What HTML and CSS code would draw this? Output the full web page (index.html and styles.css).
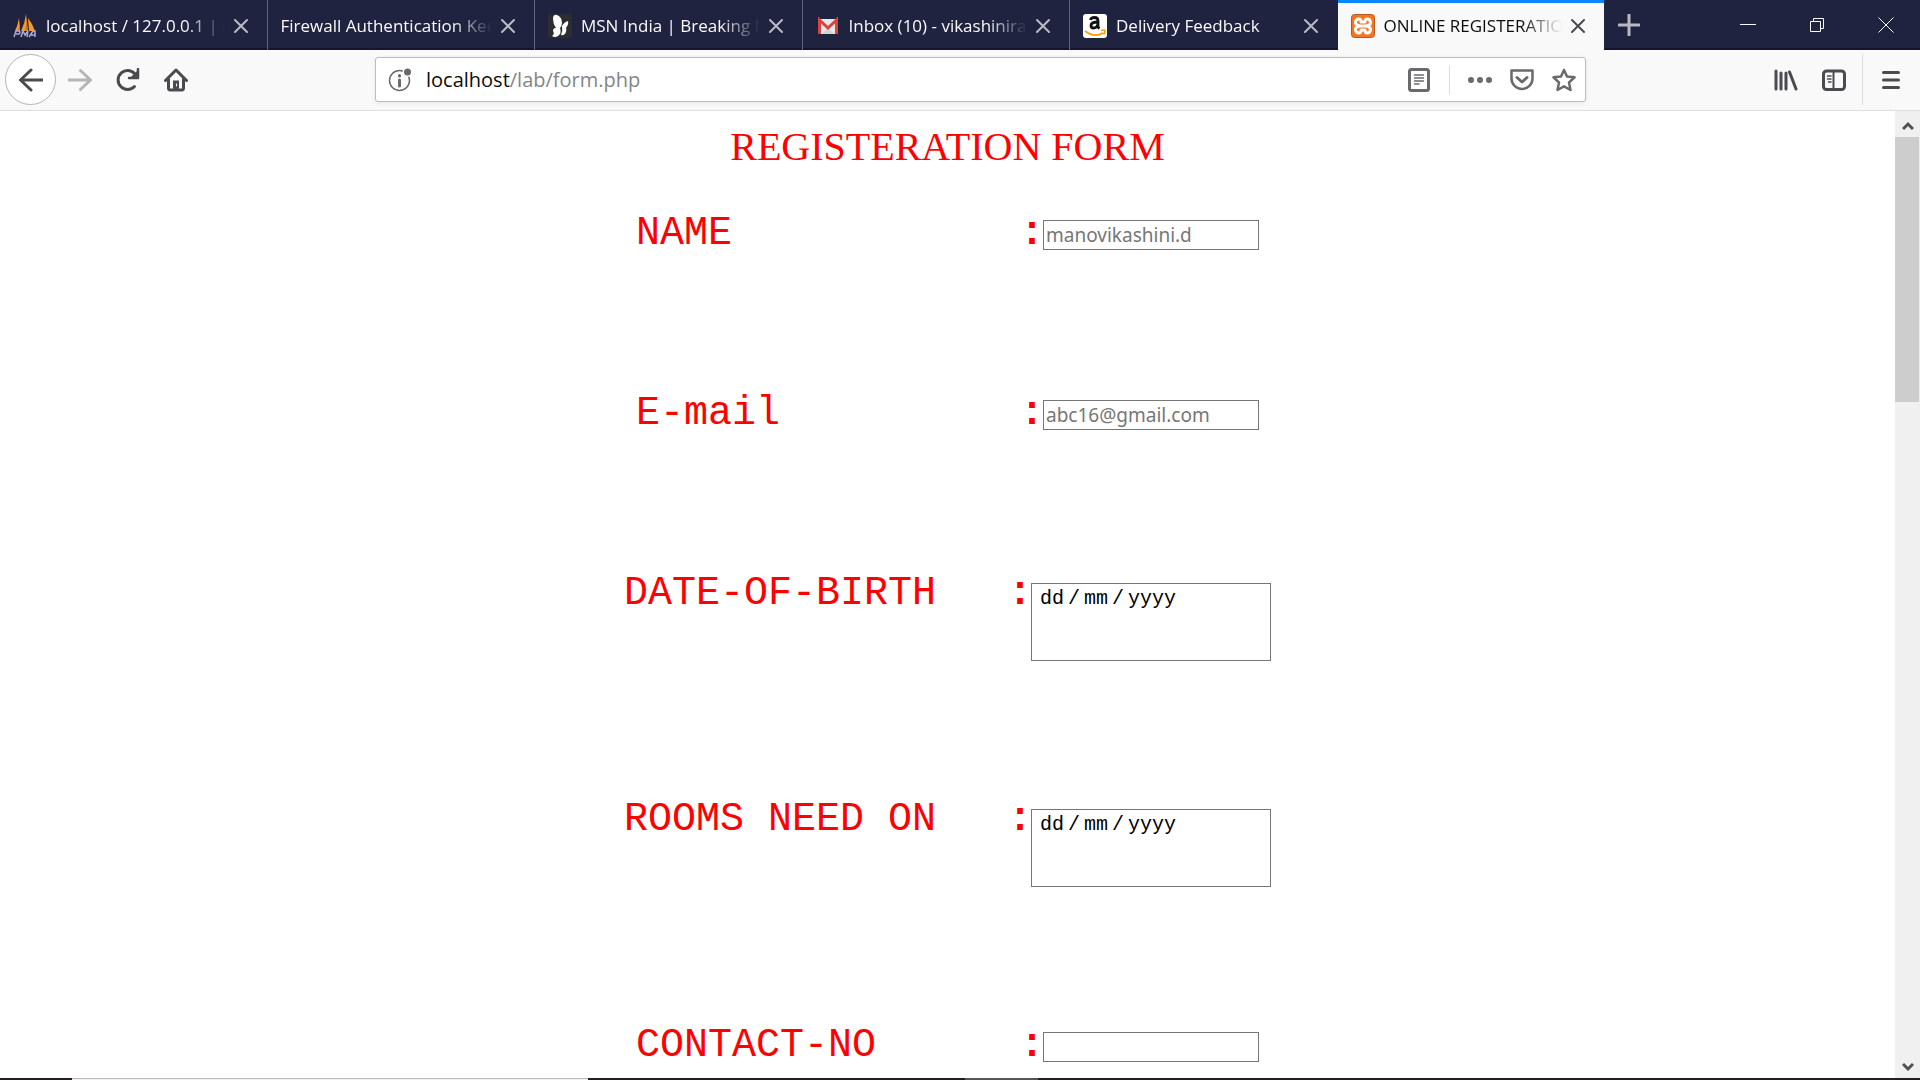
FILE: index.html
```html
<!DOCTYPE html>
<html lang="en">
<head>
<meta charset="utf-8">
<title>ONLINE REGISTERATION</title>
<link rel="stylesheet" href="styles.css">
</head>
<body>
<header class="tabbar">
  <nav class="tabs" aria-label="Tabs">
    <div class="tab">
      <svg class="favicon" viewBox="0 0 24 24"><path d="M2 17Q5 11 6 4L7 17ZM8 17Q12 9 13 0L15 17ZM15 4Q19 9 22 17H16Z" fill="#f79a28"/><path d="M5 17L7 7V17ZM12 17L14 5V17Z" fill="#c9782a"/><path d="M1 23L3 17H6Q8 18 6 20H3M8 23L10 17L12 21L15 17L14 23M16 23L20 17H22V23M18 21H22" fill="none" stroke="#a9abd6" stroke-width="1.5"/></svg>
      <a class="tab-title" href="#">localhost / 127.0.0.1 | p</a>
      <button class="tab-close" aria-label="Close tab"><svg viewBox="0 0 16 16"><path d="M2 2L14 14M14 2L2 14"/></svg></button>
    </div>
    <div class="tab">
      <a class="tab-title" href="#">Firewall Authentication Kee</a>
      <button class="tab-close" aria-label="Close tab"><svg viewBox="0 0 16 16"><path d="M2 2L14 14M14 2L2 14"/></svg></button>
    </div>
    <div class="tab">
      <svg class="favicon" viewBox="0 0 24 24"><path d="M0 0H24V24H0Z" fill="#2b2d30"/><path d="M5 5Q5 0 9 1Q14 3 14 9Q14 12 12 14Q14 19 10 22Q7 24 4 22Q7 20 5 17Q5 14 8 14Q5 10 5 5ZM14 12Q16 8 20 7Q21 10 18 14Q19 16 17 20Q14 22 13 21Q15 17 14 12Z" fill="#fff"/></svg>
      <a class="tab-title" href="#">MSN India | Breaking N</a>
      <button class="tab-close" aria-label="Close tab"><svg viewBox="0 0 16 16"><path d="M2 2L14 14M14 2L2 14"/></svg></button>
    </div>
    <div class="tab">
      <svg class="favicon" viewBox="0 0 24 24"><path d="M3 5H21V20H3Z" fill="#e9e9e9"/><path d="M6 20L12 13L18 20Z" fill="#d5d5d5"/><path d="M3.500 20V6L12 14L20.500 6V20" fill="none" stroke="#d9453a" stroke-width="3"/></svg>
      <a class="tab-title" href="#">Inbox (10) - vikashinira</a>
      <button class="tab-close" aria-label="Close tab"><svg viewBox="0 0 16 16"><path d="M2 2L14 14M14 2L2 14"/></svg></button>
    </div>
    <div class="tab">
      <svg class="favicon" viewBox="0 0 24 24"><rect width="24" height="24" rx="3" fill="#fff"/><path d="M7.500 6Q8 3.500 11.500 3.500Q15 3.500 15 7V12Q15 13.500 16.500 14.500M15 8Q8 8 8 11.500Q8 14 10.500 14Q14 14 15 10" fill="none" stroke="#111" stroke-width="2.800"/><path d="M2 17Q11 24 20 19M18 16.500Q22 15.500 22 16.500Q22 19 20.500 20.500" fill="none" stroke="#f90" stroke-width="1.700"/></svg>
      <a class="tab-title" href="#">Delivery Feedback</a>
      <button class="tab-close" aria-label="Close tab"><svg viewBox="0 0 16 16"><path d="M2 2L14 14M14 2L2 14"/></svg></button>
    </div>
    <div class="tab tab-active">
      <svg class="favicon" viewBox="0 0 24 24"><rect x=".5" y=".5" width="23" height="23" rx="3" fill="#f37623" stroke="#b9581c"/><path d="M9 12H15M9 12Q4 11 4.500 8Q5 5 8 5Q10 5 10 8H14Q14 5 16 5Q19 5 19.500 8Q20 11 15 12Q20 13 19.500 16Q19 19 16 19Q14 19 14 16H10Q10 19 8 19Q5 19 4.500 16Q4 13 9 12Z" fill="none" stroke="#fff" stroke-width="3" stroke-linejoin="round"/></svg>
      <a class="tab-title" href="#" aria-current="page">ONLINE REGISTERATIO</a>
      <button class="tab-close" aria-label="Close tab"><svg viewBox="0 0 16 16"><path d="M2 2L14 14M14 2L2 14"/></svg></button>
    </div>
  </nav>
  <button class="new-tab" aria-label="New tab"><svg viewBox="0 0 22 22"><path d="M11 1V21M1 11H21"/></svg></button>
  <div class="window-controls">
    <button aria-label="Minimize"><svg viewBox="0 0 16 16"><path d="M0 7.500H16"/></svg></button>
    <button aria-label="Restore"><svg viewBox="0 0 16 16"><path d="M1.500 4.500H11.500V14.500H1.500ZM4.500 4V1.500H14.500V11.500H12"/></svg></button>
    <button aria-label="Close window"><svg viewBox="0 0 16 16"><path d="M.5 .5L15.500 15.500M15.500 .5L.5 15.500"/></svg></button>
  </div>
</header>

<div class="toolbar">
  <div class="nav-buttons">
    <button class="back" aria-label="Back"><svg class="icon" viewBox="0 0 24 24"><path d="M24 12H1.500M12 2L1.500 12L12 22" stroke-width="3"/></svg></button>
    <button class="forward" aria-label="Forward"><svg class="icon" viewBox="0 0 24 24"><path d="M0 12H22.500M12.500 2.500L22.500 12L12.500 21.500" stroke-width="3"/></svg></button>
    <button aria-label="Reload"><svg class="icon" viewBox="0 0 24 24"><path d="M18.500 18.500A9.500 9.500 0 1 1 19 6" stroke-width="3"/><path d="M22 1V10H13" stroke-width="2.500"/><path d="M22 2V10H14Z" fill="currentColor" stroke="none"/></svg></button>
    <button aria-label="Home"><svg class="icon" viewBox="0 0 24 24"><path d="M1.500 12.500L12 2L22.500 12.500M4.500 11V20Q4.500 22 6.500 22H17.500Q19.500 22 19.500 20V11" stroke-width="3"/><path d="M9 22V12.500H15V22Z" fill="currentColor" stroke="none"/><path d="M12.500 16V18" stroke="#f9f9fa" stroke-width="1"/></svg></button>
  </div>
  <div class="urlbar">
    <button aria-label="Site information"><svg class="icon" viewBox="0 0 24 24"><circle cx="11.500" cy="12.500" r="10" stroke-width="1.500"/><circle cx="19.500" cy="4" r="5" fill="#fff" stroke="none"/><circle cx="19.500" cy="4" r="3.500" fill="currentColor" stroke="none"/><path d="M11.500 12V18M11.500 7.500V8" stroke-width="3"/></svg></button>
    <a class="url" href="#">localhost<span class="url-path">/lab/form.php</span></a>
    <button aria-label="Reader view"><svg class="icon" viewBox="0 0 24 24"><rect x="2.500" y="1.500" width="19" height="21" rx="2" stroke-width="3"/><path d="M7.500 7H16.500M7.500 10H16.500M7.500 13H16.500M7.500 16H12" stroke-width="1.500"/></svg></button>
    <div class="page-actions">
      <button aria-label="Page actions"><svg class="icon" viewBox="0 0 24 24"><path d="M3 12H3.010M12 12H12.010M21 12H21.010" stroke-width="6"/></svg></button>
      <button aria-label="Save to Pocket"><svg class="icon" viewBox="0 0 24 24"><path d="M1.500 2.500H22.500V10.500A10.500 10.500 0 0 1 1.500 10.500Z" stroke-width="2.500"/><path d="M7 9.500L12 14L17 9.500" stroke-width="3"/></svg></button>
      <button aria-label="Bookmark"><svg class="icon" viewBox="0 0 24 24"><path d="M12 2L15 8.500L22.500 9.300L17 14.500L18.500 22L12 18.300L5.500 22L7 14.500L1.500 9.300L9 8.500Z" stroke-width="2.500"/></svg></button>
    </div>
  </div>
  <div class="tools">
    <button aria-label="Library"><svg class="icon" viewBox="0 0 24 24"><path d="M2 3V21M7 5V21M12 5V21M15.500 4L22 21" stroke-width="3"/></svg></button>
    <button aria-label="Sidebars"><svg class="icon" viewBox="0 0 24 24"><rect x="1.500" y="3" width="21" height="18.500" rx="3" stroke-width="3"/><path d="M11.500 3V21" stroke-width="2"/><path d="M5.500 8H9M5.500 11H9M6.500 14H9" stroke-width="1.500"/></svg></button>
    <button class="menu" aria-label="Menu"><svg class="icon" viewBox="0 0 24 24"><path d="M4.500 4.500H19.500M4.500 12H19.500M4.500 19.500H19.500" stroke-width="3"/></svg></button>
  </div>
</div>

<div class="viewport">
  <main class="page">
    <h1>REGISTERATION FORM</h1>
    <form class="form">
      <div class="row"><label for="name">NAME</label><b>:</b><input class="text" id="name" type="text" placeholder="manovikashini.d"></div>
      <div class="row"><label for="email">E-mail</label><b>:</b><input class="text" id="email" type="email" placeholder="abc16@gmail.com"></div>
      <div class="row"><label for="birth">DATE-OF-BIRTH</label><b>:</b>
        <div class="date" role="group" aria-label="Date of birth"><input id="birth" placeholder="dd" aria-label="Day"><span>/</span><input placeholder="mm" aria-label="Month"><span>/</span><input class="year" placeholder="yyyy" aria-label="Year"></div></div>
      <div class="row"><label for="rooms">ROOMS NEED ON</label><b>:</b>
        <div class="date" role="group" aria-label="Rooms need on"><input id="rooms" placeholder="dd" aria-label="Day"><span>/</span><input placeholder="mm" aria-label="Month"><span>/</span><input class="year" placeholder="yyyy" aria-label="Year"></div></div>
      <div class="row"><label for="contact">CONTACT-NO</label><b>:</b><input class="text" id="contact" type="tel"></div>
    </form>
  </main>
  <div class="scrollbar">
    <button aria-label="Scroll up"><svg viewBox="0 0 12 10"><path d="M1 8L6 3L11 8"/></svg></button>
    <div class="track"><div class="thumb"></div></div>
    <button aria-label="Scroll down"><svg viewBox="0 0 12 10"><path d="M1 2L6 7L11 2"/></svg></button>
  </div>
</div>

<footer class="taskbar"><div class="start"></div><div class="search"></div><div class="apps"></div><div class="running"></div></footer>
</body>
</html>
```
FILE: styles.css
```css
* { box-sizing: border-box; }

body {
  margin: 0;
  height: 100vh;
  display: flex;
  flex-direction: column;
  overflow: hidden;
  background: #fff;
  font-family: "Open Sans", "Noto Sans", sans-serif;
}

button {
  display: flex;
  align-items: center;
  justify-content: center;
  padding: 0;
  border: 0;
  background: none;
  color: inherit;
}

a { color: inherit; text-decoration: none; }

svg { fill: none; stroke: currentColor; flex: none; }

/* Tab strip */
.tabbar {
  display: flex;
  flex: none;
  height: 50px;
  background: #202340;
  box-shadow: inset 0 -2px #15162c;
  color: #f9f9fa;
}

.tabs { display: flex; flex: 1; min-width: 0; }

.tab {
  display: flex;
  flex: 1 1 0;
  align-items: center;
  min-width: 0;
  padding: 2px 18px 0 13px;
  border-right: 1px solid #63657a;
}

.tab:nth-last-child(2) { border-right-color: transparent; }

.tab-active {
  padding-top: 0;
  padding-bottom: 1px;
  border-top: 3px solid #0a84ff;
  border-right: 0;
  background: #f9f9fa;
  color: #0c0c0d;
}

.favicon { width: 24px; height: 24px; margin-right: 9px; stroke: none; }

.tab-title {
  flex: 1;
  overflow: hidden;
  white-space: nowrap;
  font-size: 17px;
  line-height: 24px;
  mask-image: linear-gradient(to left, transparent, #000 40px);
}

.tab-close { margin-left: 8px; color: #b9bac6; }
.tab-active .tab-close { color: #4a4a4f; }
.tab-close svg { width: 16px; height: 16px; stroke-width: 2; stroke-linecap: round; }

.new-tab { width: 50px; color: #b9bac6; }
.new-tab svg { width: 22px; height: 22px; stroke-width: 3; stroke-linecap: round; }

.window-controls { display: flex; margin-left: 59px; }
.window-controls button { width: 69px; }
.window-controls svg { width: 16px; height: 16px; }

/* Navigation toolbar */
.toolbar {
  display: flex;
  flex: none;
  align-items: center;
  height: 61px;
  padding: 0 2px 1px 5px;
  border-bottom: 1px solid #dedede;
  background: #f9f9fa;
  color: #4a4a4f;
}

.icon { width: 24px; height: 24px; stroke-linecap: round; stroke-linejoin: round; }

.nav-buttons { display: flex; align-items: center; flex: none; width: 370px; }
.nav-buttons button { width: 48px; height: 51px; }
.nav-buttons .back { width: 51px; border: 1px solid #b5b5b5; border-radius: 50%; background: #fff; }
.nav-buttons .forward { color: #b5b5b7; }

.urlbar {
  display: flex;
  flex: 1;
  align-items: center;
  height: 45px;
  padding-left: 12px;
  border: 1px solid #bcbcbc;
  border-radius: 3px;
  background: #fff;
  box-shadow: 0 1px 5px rgba(0, 0, 0, .08);
  color: #6a6a6d;
}

.url { flex: 1; margin-left: 14px; color: #0c0c0d; font-size: 20px; line-height: 28px; }
.url-path { color: #858588; }

.page-actions {
  display: flex;
  gap: 18px;
  margin-left: 18px;
  padding: 3px 9px 3px 18px;
  border-left: 1px solid #dedede;
}

.tools { display: flex; align-items: center; margin-left: 188px; gap: 24px; }
.menu { width: 56px; height: 51px; margin-left: -8px; border-left: 1px solid #dedede; }

/* Page */
.viewport { display: flex; flex: 1; min-height: 0; }

.page { flex: 1; overflow: hidden; color: #f00; }

h1 {
  margin: 12px 0 39px;
  font: 40px/48px "Liberation Serif", serif;
  text-align: center;
}

.form { display: flex; flex-direction: column; gap: 133px; }

.row {
  display: flex;
  justify-content: center;
  align-items: flex-start;
  font: 40px/47px "Liberation Mono", monospace;
}

.row label { width: 384px; }
.row b { width: 23px; }

.text {
  width: 216px;
  height: 30px;
  margin: 10px 0 0;
  padding: 0 2px;
  border: 1px solid #767676;
  background: #fff;
  font: 19px/28px "Noto Sans", sans-serif;
}

.text::placeholder { color: #767676; }

.date {
  display: flex;
  align-items: flex-start;
  width: 240px;
  height: 78px;
  margin: 13px 0 2px;
  padding: 3px 8px;
  border: 1px solid #767676;
  color: #000;
  font: 20px/24px "Liberation Mono", monospace;
}

.date input {
  width: 24px;
  height: 24px;
  padding: 0;
  border: 0;
  background: none;
  font: inherit;
}

.date .year { width: 48px; }
.date input::placeholder { color: #000; }
.date span { width: 20px; text-align: center; }

/* Scrollbar */
.scrollbar {
  display: flex;
  flex: none;
  flex-direction: column;
  width: 25px;
  background: #f0f0f0;
  color: #505050;
}

.scrollbar button { height: 26px; padding-top: 3px; }
.scrollbar svg { width: 12px; height: 10px; stroke-width: 3; }
.track { flex: 1; }
.thumb { width: 24px; height: 29%; background: #cdcdcd; }

/* Edge of the taskbar */
.taskbar { display: flex; flex: none; height: 2px; background: #231f20; }
.start { width: 72px; }
.search { width: 516px; border-top: 1px solid #b9b9b9; background: #f2f2f2; }
.apps { width: 377px; }
.running { width: 73px; background: #555; }
```
